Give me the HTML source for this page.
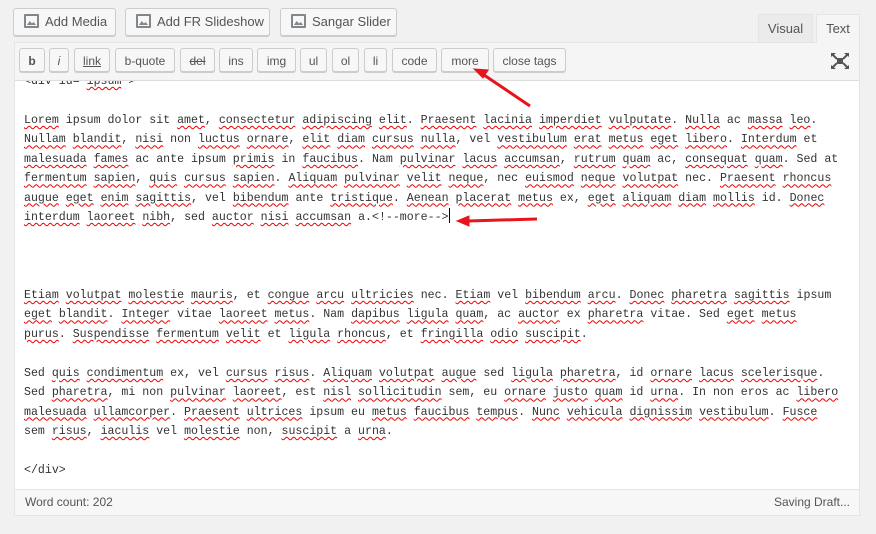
<!DOCTYPE html>
<html><head><meta charset="utf-8"><style>
body{margin:0;width:876px;height:534px;background:#f1f1f1;position:relative;overflow:hidden;font-family:"Liberation Sans",sans-serif;}
.tb{position:absolute;top:8px;height:26px;border:1px solid #ccc;background:#f7f7f7;border-radius:3px;font-size:13px;color:#555;line-height:26px;box-shadow:0 1px 0 #ccc;box-sizing:content-box}
.tb .ic{display:inline-block;width:15px;height:14px;background:#82878c;vertical-align:-2px;margin:0 6px 0 10px;border-radius:1px;position:relative}
.tb .ic:after{content:"";position:absolute;left:2px;top:2px;right:2px;bottom:2px;background:#f7f7f7}
.tb .ic:before{content:"";position:absolute;left:3px;bottom:3px;width:9px;height:5px;background:#82878c;z-index:1;clip-path:polygon(0 100%,30% 20%,55% 70%,75% 40%,100% 100%)}
.tab{position:absolute;top:14px;height:28px;font-size:13px;color:#555;line-height:28px;text-align:center;box-sizing:border-box}
.wrap{position:absolute;left:14px;top:42px;width:846px;height:474px;border:1px solid #e5e5e5;box-sizing:border-box;background:#fff}
.tool{position:absolute;left:0;top:0;width:844px;height:37px;background:#f5f5f5;border-bottom:1px solid #ddd}
.b{position:absolute;top:5px;height:24px;border:1px solid #ccc;background:#f7f7f7;border-radius:3px;font-size:12px;color:#555;line-height:24px;text-align:center;box-shadow:0 1px 0 #ccc;box-sizing:border-box}
.content{position:absolute;left:0;top:38px;width:844px;height:410px;overflow:hidden}
pre{margin:0;position:absolute;left:9px;top:-9px;font-family:"Liberation Mono",monospace;font-size:11.6px;line-height:19.45px;color:#333;white-space:pre}
.w{text-decoration:underline wavy #e00;text-decoration-thickness:1px;text-underline-offset:2px}
.foot{position:absolute;left:0;bottom:0;width:844px;height:25px;background:#f7f7f7;border-top:1px solid #e5e5e5;font-size:12px;color:#555;line-height:25px}
</style></head><body>
<div class="tb" style="left:13px;width:101px"><span class="ic"></span>Add Media</div>
<div class="tb" style="left:125px;width:143px"><span class="ic"></span>Add FR Slideshow</div>
<div class="tb" style="left:280px;width:115px"><span class="ic"></span>Sangar Slider</div>
<div class="tab" style="left:758px;width:55px;background:#ebebeb;border:1px solid #e5e5e5;border-bottom:none">Visual</div>
<div class="tab" style="left:816px;width:44px;background:#f5f5f5;border:1px solid #e5e5e5;border-bottom:none;z-index:2;height:29px">Text</div>
<div class="wrap">
<div class="tool">
<div class="b" style="left:4px;width:26px;font-weight:bold">b</div>
<div class="b" style="left:34px;width:20px;font-style:italic">i</div>
<div class="b" style="left:59px;width:36px;text-decoration:underline">link</div>
<div class="b" style="left:100px;width:60px">b-quote</div>
<div class="b" style="left:165px;width:35px;text-decoration:line-through">del</div>
<div class="b" style="left:204px;width:34px">ins</div>
<div class="b" style="left:242px;width:39px">img</div>
<div class="b" style="left:285px;width:27px">ul</div>
<div class="b" style="left:317px;width:27px">ol</div>
<div class="b" style="left:349px;width:23px">li</div>
<div class="b" style="left:377px;width:45px">code</div>
<div class="b" style="left:426px;width:48px">more</div>
<div class="b" style="left:478px;width:73px">close tags</div>
<svg style="position:absolute;left:816px;top:10px" width="18" height="16" viewBox="0 0 18 16"><g fill="#555"><rect x="6" y="5" width="6" height="6"/><path d="M0 0h5l-5 4zM18 0h-5l5 4zM0 16h5l-5-4zM18 16h-5l5-4z"/><path d="M1 1l5 5M17 1l-5 5M1 15l5-5M17 15l-5-5" stroke="#555" stroke-width="2"/></g></svg>
</div>
<div class="content"><pre id="t">&lt;div id="ipsum"&gt;

Lorem ipsum dolor sit amet, consectetur adipiscing elit. Praesent lacinia imperdiet vulputate. Nulla ac massa leo.
Nullam blandit, nisi non luctus ornare, elit diam cursus nulla, vel vestibulum erat metus eget libero. Interdum et
malesuada fames ac ante ipsum primis in faucibus. Nam pulvinar lacus accumsan, rutrum quam ac, consequat quam. Sed at
fermentum sapien, quis cursus sapien. Aliquam pulvinar velit neque, nec euismod neque volutpat nec. Praesent rhoncus
augue eget enim sagittis, vel bibendum ante tristique. Aenean placerat metus ex, eget aliquam diam mollis id. Donec
interdum laoreet nibh, sed auctor nisi accumsan a.&lt;!--more--&gt;|



Etiam volutpat molestie mauris, et congue arcu ultricies nec. Etiam vel bibendum arcu. Donec pharetra sagittis ipsum
eget blandit. Integer vitae laoreet metus. Nam dapibus ligula quam, ac auctor ex pharetra vitae. Sed eget metus
purus. Suspendisse fermentum velit et ligula rhoncus, et fringilla odio suscipit.

Sed quis condimentum ex, vel cursus risus. Aliquam volutpat augue sed ligula pharetra, id ornare lacus scelerisque.
Sed pharetra, mi non pulvinar laoreet, est nisl sollicitudin sem, eu ornare justo quam id urna. In non eros ac libero
malesuada ullamcorper. Praesent ultrices ipsum eu metus faucibus tempus. Nunc vehicula dignissim vestibulum. Fusce
sem risus, iaculis vel molestie non, suscipit a urna.

&lt;/div&gt;</pre></div>
<div class="foot"><span style="position:absolute;left:10px">Word count: 202</span><span style="position:absolute;right:9px">Saving Draft...</span></div>
</div>
<svg style="position:absolute;left:0;top:0" width="876" height="534"><g stroke="#e8141b" stroke-width="3" fill="#e8141b"><line x1="530" y1="106" x2="484" y2="75"/><path d="M474 69l14 1-5 8z" stroke-width="1"/><line x1="537" y1="219" x2="468" y2="221"/><path d="M457 221l12-5v10z" stroke-width="1"/></g></svg>
<script>
var ok=new Set(["dolor","sit","et","in","at","ac","ex","id","a","non","sed","est","ante","ipsum","vitae","nec","nam","vel","mi","eu","eros","sem","div","more"]);
var p=document.getElementById('t');
var raw=p.textContent;
function esc(s){return s.replace(/&/g,'&amp;').replace(/</g,'&lt;').replace(/>/g,'&gt;');}
var out='';
raw.split(/([A-Za-z]+)/).forEach(function(tok,i){
 if(i%2===1){out+=ok.has(tok.toLowerCase())?tok:'<span class="w">'+tok+'</span>';}
 else{out+=esc(tok).replace('|','<span style="display:inline-block;width:1px;height:15px;background:#000;vertical-align:-3px"></span>');}
});
out=out.replace('"ipsum"','"<span class="w">ipsum</span>"');
p.innerHTML=out;
</script>
</body></html>
